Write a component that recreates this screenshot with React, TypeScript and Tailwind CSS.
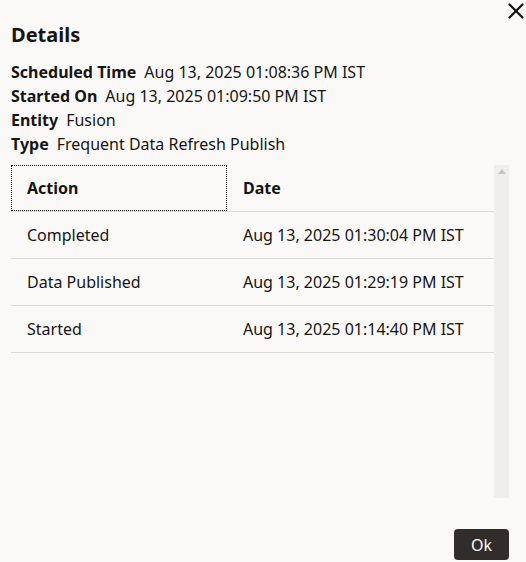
import { X } from 'lucide-react';

const rows = [
  { action: 'Completed', date: 'Aug 13, 2025 01:30:04 PM IST' },
  { action: 'Data Published', date: 'Aug 13, 2025 01:29:19 PM IST' },
  { action: 'Started', date: 'Aug 13, 2025 01:14:40 PM IST' },
];

const details = [
  { label: 'Scheduled Time', value: 'Aug 13, 2025 01:08:36 PM IST' },
  { label: 'Started On', value: 'Aug 13, 2025 01:09:50 PM IST' },
  { label: 'Entity', value: 'Fusion' },
  { label: 'Type', value: 'Frequent Data Refresh Publish' },
];

export default function App() {
  return (
    <div className="relative flex h-[562px] w-[526px] flex-col bg-[#fbf9f8] font-['Noto_Sans',sans-serif] text-[#161513]">
      <button className="absolute left-[503px] top-[-2px]" aria-label="Close">
        <X size={26} strokeWidth={2.1} />
      </button>

      <div className="px-[11px] pt-[22px]">
        <h1 className="text-[20px] font-bold leading-[26px]">Details</h1>
        <div className="mt-[12px] flex flex-col">
          {details.map((d) => (
            <div key={d.label} className="text-[16px] leading-[24px]">
              <span className="font-bold">{d.label}</span>
              <span className="ml-[8px]">{d.value}</span>
            </div>
          ))}
        </div>
      </div>

      {/* Table with scrollbar */}
      <div className="ml-[11px] mt-[9px] flex h-[333px] w-[498px]">
        <div className="flex-1">
          <div className="flex h-[47px] border-b border-[#dcdad8]">
            <div className="flex w-[216px] items-center border border-dotted border-[#161513] pl-[15px] text-[16px] font-bold">
              Action
            </div>
            <div className="flex flex-1 items-center pl-[16px] text-[16px] font-bold">Date</div>
          </div>
          {rows.map((r) => (
            <div key={r.action} className="flex h-[47px] items-center border-b border-[#dcdad8] text-[16px]">
              <div className="w-[216px] pl-[16px]">{r.action}</div>
              <div className="flex-1 pl-[16px]">{r.date}</div>
            </div>
          ))}
        </div>
        <div className="flex w-[15px] justify-center bg-[#efeeec] pt-[4px]">
          <div className="h-0 w-0 border-x-[4px] border-b-[5px] border-x-transparent border-b-[#c8c6c4]" />
        </div>
      </div>

      <div className="mt-auto flex justify-end px-[17px] pb-[2px]">
        <button className="h-[31px] w-[55px] rounded-[4px] bg-[#312d2a] text-[16px] text-white">Ok</button>
      </div>
    </div>
  );
}
